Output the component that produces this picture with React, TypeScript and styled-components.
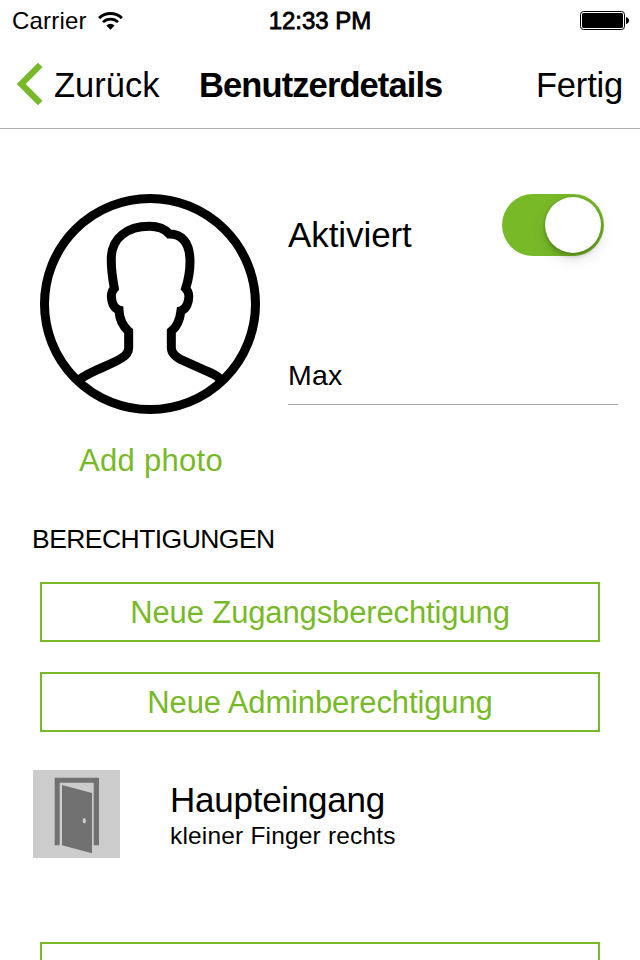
import React from "react";
import styled, { createGlobalStyle } from "styled-components";

const GREEN = "#78b928";

const GlobalStyle = createGlobalStyle`
  * { box-sizing: border-box; }
  html, body { margin: 0; padding: 0; background: #fff; }
  body { font-family: "Liberation Sans", Arial, Helvetica, sans-serif; color: #000; }
  svg { display: block; }
`;

const Screen = styled.div`
  width: 640px;
  height: 960px;
  overflow: hidden;
  display: flex;
  flex-direction: column;
  background: #fff;
`;

const StatusBar = styled.header`
  height: 40px;
  flex: none;
  display: grid;
  grid-template-columns: 1fr auto 1fr;
  align-items: center;
  padding: 1px 11px 0 11px;
  font-size: 24px;
  line-height: 39px;
`;

const Carrier = styled.div`
  display: flex;
  align-items: center;
  gap: 11px;
  padding-left: 1px;
  letter-spacing: 0.2px;
`;

const Clock = styled.div`
  -webkit-text-stroke: 0.8px #000;
`;

const BatterySlot = styled.div`
  justify-self: end;
`;

const NavBar = styled.nav`
  height: 89px;
  flex: none;
  display: grid;
  grid-template-columns: 199px 1fr auto;
  align-items: center;
  padding-right: 17px;
  border-bottom: 1px solid #b2b2b2;
  font-size: 34.5px;
  line-height: 40px;
`;

const NavButton = styled.button`
  display: flex;
  align-items: center;
  padding: 0;
  border: 0;
  background: none;
  font: inherit;
  letter-spacing: -0.2px;
  color: inherit;
`;

const BackButton = styled(NavButton)`
  padding-left: 17px;
  gap: 11px;
  letter-spacing: 0;
`;

const NavLabel = styled.span`
  padding-top: 2px;
`;

const Title = styled.h1`
  margin: 0;
  padding-top: 2px;
  font-size: 34.5px;
  font-weight: 700;
  letter-spacing: -0.9px;
`;

const Profile = styled.section`
  height: 393px;
  flex: none;
  display: grid;
  grid-template-columns: 220px 330px;
  column-gap: 28px;
  padding: 65px 22px 0 40px;
`;

const PhotoColumn = styled.div`
  display: flex;
  flex-direction: column;
  align-items: center;
`;

const AddPhoto = styled.button`
  margin-top: 27px;
  padding: 0 0 0 2px;
  border: 0;
  background: none;
  font: inherit;
  font-size: 31px;
  line-height: 40px;
  letter-spacing: 0.28px;
  color: ${GREEN};
`;

const FieldColumn = styled.div`
  display: flex;
  flex-direction: column;
`;

const SwitchRow = styled.div`
  height: 140px;
  display: flex;
  justify-content: space-between;
  align-items: flex-start;
  padding-right: 14px;
`;

const SwitchLabel = styled.span`
  padding-top: 21px;
  font-size: 35px;
  line-height: 40px;
  letter-spacing: -0.08px;
`;

const Switch = styled.div`
  width: 102px;
  height: 62px;
  display: flex;
  justify-content: flex-end;
  align-items: center;
  padding-right: 3px;
  border-radius: 31px;
  background: ${GREEN};
`;

const Knob = styled.div`
  width: 56px;
  height: 56px;
  border-radius: 50%;
  background: #fff;
  box-shadow: 0 6px 15px rgba(0, 0, 0, 0.12), 0 4px 4px rgba(0, 0, 0, 0.16), 0 0 2px rgba(0, 0, 0, 0.25);
`;

const NameField = styled.div`
  height: 71px;
  padding-top: 21px;
  border-bottom: 1px solid #aaa;
  font-size: 28.5px;
  line-height: 40px;
  letter-spacing: 0.2px;
`;

const SectionTitle = styled.h2`
  margin: 0;
  height: 60px;
  flex: none;
  padding: 0 32px;
  font-size: 26.5px;
  font-weight: 400;
  line-height: 34px;
  letter-spacing: -0.55px;
`;

const ActionButton = styled.button<{ $gap?: number }>`
  flex: none;
  width: 560px;
  height: 60px;
  margin: 0 40px ${(p) => p.$gap ?? 0}px;
  padding: 2px 0 0;
  border: 2px solid ${GREEN};
  background: #fff;
  font: inherit;
  font-size: 31px;
  line-height: 40px;
  letter-spacing: -0.13px;
  color: ${GREEN};
`;

const PermissionRow = styled.div`
  height: 172px;
  flex: none;
  display: flex;
  gap: 50px;
  padding-left: 33px;
`;

const DoorTile = styled.div`
  width: 87px;
  height: 88px;
  flex: none;
  background: #ccc;
`;

const PermissionText = styled.div`
  display: flex;
  flex-direction: column;
  padding-top: 10px;
`;

const PermissionName = styled.span`
  font-size: 35px;
  line-height: 40px;
  letter-spacing: -0.25px;
`;

const PermissionDetail = styled.span`
  padding-top: 1px;
  font-size: 24.5px;
  line-height: 30px;
  letter-spacing: 0.18px;
`;

const WifiIcon = () => (
  <svg width="25" height="18" viewBox="0 0 25 18" fill="none" stroke="#000">
    <path d="M1.1 6.1 A16.4 16.4 0 0 1 23.9 6.1" strokeWidth="2.9" />
    <path d="M5 10.1 A10.8 10.8 0 0 1 20 10.1" strokeWidth="2.7" />
    <path d="M12.5 17.7 L8.4 13.5 A5.9 5.9 0 0 1 16.6 13.5 Z" fill="#000" stroke="none" />
  </svg>
);

const BatteryIcon = () => (
  <svg width="49" height="19" viewBox="0 0 49 19">
    <rect x="0.5" y="0.5" width="44" height="18" rx="3" fill="#fff" stroke="#000" />
    <rect x="2" y="2" width="41" height="15" rx="1.5" fill="#000" />
    <path d="M46 6 Q49 7 49 9.5 Q49 12 46 13 Z" fill="#000" />
  </svg>
);

const BackIcon = () => (
  <svg width="26" height="42" viewBox="0 0 26 42" fill="none" stroke={GREEN} strokeWidth="6.4">
    <path d="M23.2 2 L4.2 21 L23.2 40" />
  </svg>
);

const Avatar = () => (
  <svg width="220" height="220" viewBox="30 27 660 660" fill="none" stroke="#000" strokeWidth="27">
    <circle cx="360" cy="357" r="316.5" />
    <path d="M148 584 C184 556 240 542 274 520 Q296 506 296 488 L296 439 C280 425 268 402 267 375 C250 370 245 350 244 334 Q244 320 253 310 C247 278 243 240 244 215 C247 160 290 124 358 124 C385 124 404 131 418 147 C454 147 480 170 480 230 C480 260 474 288 467 310 C479 322 478 343 471 360 Q465 373 453 377 C450 402 441 425 424 439 L424 488 C424 504 440 518 460 527 L530 558 Q556 568 574 584" />
  </svg>
);

const DoorIcon = () => (
  <svg width="87" height="88" viewBox="39 31 261 264">
    <path d="M104 54 H237 V257 H221 V69 H119 V257 H104 Z" fill="#717171" />
    <path d="M126 76 L216 100 V281 L126 257 Z" fill="#717171" />
    <ellipse cx="193" cy="183" rx="5" ry="8" fill="#ccc" />
  </svg>
);

export default function App() {
  return (
    <>
      <GlobalStyle />
      <Screen>
        <StatusBar>
          <Carrier>
            <span>Carrier</span>
            <WifiIcon />
          </Carrier>
          <Clock>12:33 PM</Clock>
          <BatterySlot>
            <BatteryIcon />
          </BatterySlot>
        </StatusBar>

        <NavBar>
          <BackButton>
            <BackIcon />
            <NavLabel>Zurück</NavLabel>
          </BackButton>
          <Title>Benutzerdetails</Title>
          <NavButton>
            <NavLabel>Fertig</NavLabel>
          </NavButton>
        </NavBar>

        <Profile>
          <PhotoColumn>
            <Avatar />
            <AddPhoto>Add photo</AddPhoto>
          </PhotoColumn>
          <FieldColumn>
            <SwitchRow>
              <SwitchLabel>Aktiviert</SwitchLabel>
              <Switch role="switch" aria-checked="true">
                <Knob />
              </Switch>
            </SwitchRow>
            <NameField>Max</NameField>
          </FieldColumn>
        </Profile>

        <SectionTitle>BERECHTIGUNGEN</SectionTitle>
        <ActionButton $gap={30}>Neue Zugangsberechtigung</ActionButton>
        <ActionButton $gap={38}>Neue Adminberechtigung</ActionButton>

        <PermissionRow>
          <DoorTile>
            <DoorIcon />
          </DoorTile>
          <PermissionText>
            <PermissionName>Haupteingang</PermissionName>
            <PermissionDetail>kleiner Finger rechts</PermissionDetail>
          </PermissionText>
        </PermissionRow>

        <ActionButton />
      </Screen>
    </>
  );
}
